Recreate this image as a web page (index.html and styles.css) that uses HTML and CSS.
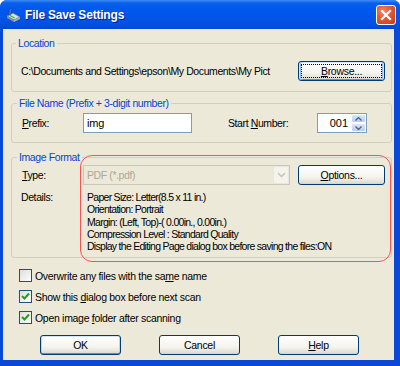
FILE: index.html
```html
<!DOCTYPE html>
<html>
<head>
<meta charset="utf-8">
<link rel="stylesheet" href="styles.css">
</head>
<body>
<div class="window">
  <div class="titlebar">
    <svg class="app-icon" width="16" height="16" viewBox="0 0 16 16">
      <path d="M2 9 L9 13 L15 10 L8 6 Z" fill="#d8dce4" stroke="#6a7080" stroke-width="0.8"/>
      <path d="M2 9 L2 11 L9 15 L9 13 Z" fill="#8a909c"/>
      <path d="M9 13 L9 15 L15 12 L15 10 Z" fill="#a8aeb8"/>
      <path d="M3 8 L5 1 L7 2 L6 7 Z" fill="#3a6fd8" stroke="#1a3f98" stroke-width="0.6"/>
      <rect x="4" y="9" width="6" height="1.2" fill="#30c040" transform="rotate(28 7 9.6)"/>
    </svg>
    <span class="title">File Save Settings</span>
    <span class="close">
      <svg width="18" height="18" viewBox="0 0 18 18"><path d="M5 5 L13 13 M13 5 L5 13" stroke="#fff" stroke-width="2.2" stroke-linecap="square"/></svg>
    </span>
  </div>
  <div class="client">
    <fieldset class="group g-location">
      <legend>Location</legend>
      <div class="row">
        <span class="path">C:\Documents and Settings\epson\My Documents\My Pict</span>
        <button class="btn btn-focus"><u>B</u>rowse...</button>
      </div>
    </fieldset>

    <fieldset class="group g-name">
      <legend>File Name (Prefix + 3-digit number)</legend>
      <div class="row">
        <span class="lbl-prefix"><u>P</u>refix:</span>
        <span class="textbox prefix">img</span>
        <span class="lbl-start">Start <u>N</u>umber:</span>
        <span class="spin">
          <span class="spin-val">001</span>
          <span class="spin-btns">
            <span class="spin-b"><svg width="7" height="4" viewBox="0 0 7 4"><path d="M0.5 3.5 L3.5 0.5 L6.5 3.5" fill="none" stroke="#4d6185" stroke-width="1.3"/></svg></span>
            <span class="spin-b"><svg width="7" height="4" viewBox="0 0 7 4"><path d="M0.5 0.5 L3.5 3.5 L6.5 0.5" fill="none" stroke="#4d6185" stroke-width="1.3"/></svg></span>
          </span>
        </span>
      </div>
    </fieldset>

    <fieldset class="group g-format">
      <legend>Image Format</legend>
      <div class="fmt-grid">
        <span class="lbl-type"><u>T</u>ype:</span>
        <span class="combo">
          <span class="combo-val">PDF (*.pdf)</span>
          <span class="combo-btn"><svg width="9" height="6" viewBox="0 0 9 6"><path d="M1 1 L4.5 4.5 L8 1" fill="none" stroke="#c9c7ba" stroke-width="1.6"/></svg></span>
        </span>
        <button class="btn"><u>O</u>ptions...</button>
        <span class="lbl-details">Details:</span>
        <div class="details">
          <div>Paper Size: Letter(8.5 x 11 in.)</div>
          <div>Orientation: Portrait</div>
          <div>Margin: (Left, Top)-( 0.00in., 0.00in.)</div>
          <div>Compression Level : Standard Quality</div>
          <div>Display the Editing Page dialog box before saving the files:ON</div>
        </div>
      </div>
    </fieldset>

    <div class="checks">
      <div class="check"><span class="box"></span><span>Overwrite any files with the sa<u>m</u>e name</span></div>
      <div class="check"><span class="box on"><svg width="11" height="11" viewBox="0 0 11 11"><path d="M2 5 L4.5 7.5 L9 2.5" fill="none" stroke="#21a121" stroke-width="2"/></svg></span><span>Show this <u>d</u>ialog box before next scan</span></div>
      <div class="check"><span class="box on"><svg width="11" height="11" viewBox="0 0 11 11"><path d="M2 5 L4.5 7.5 L9 2.5" fill="none" stroke="#21a121" stroke-width="2"/></svg></span><span>Open image <u>f</u>older after scanning</span></div>
    </div>

    <div class="buttons">
      <button class="btn btn-wide btn-default">OK</button>
      <button class="btn btn-wide">Cancel</button>
      <button class="btn btn-wide"><u>H</u>elp</button>
    </div>

    <div class="annot"></div>
  </div>
</div>
</body>
</html>
```
FILE: styles.css
```css
html, body {
  margin: 0;
  padding: 0;
  background: #ffffff;
}
body {
  width: 400px;
  height: 366px;
  overflow: hidden;
  font-family: "Liberation Sans", Arial, sans-serif;
  font-size: 10.5px;
  letter-spacing: -0.4px;
  color: #000;
}
u { text-decoration: underline; text-underline-offset: 1px; }

.window {
  width: 400px;
  height: 366px;
  display: flex;
  flex-direction: column;
  background: #0a48d8;
  border-radius: 7px 7px 0 0;
  overflow: hidden;
}

.titlebar {
  flex: 0 0 29px;
  display: flex;
  align-items: center;
  background: linear-gradient(#3d8cf7 0px, #0a5fea 3px, #0058ee 8px, #0055e8 18px, #004fe0 25px, #0046d2 29px);
}
.app-icon {
  margin-left: 5px;
  margin-top: 1px;
}
.title {
  margin-left: 4px;
  color: #fff;
  font-weight: bold;
  font-size: 12px;
  letter-spacing: -0.2px;
  text-shadow: 1px 1px 0 #0a1e80;
}
.close {
  margin-left: auto;
  margin-right: 4px;
  width: 20px;
  height: 20px;
  box-sizing: border-box;
  border: 1px solid #fff;
  border-radius: 3px;
  background: radial-gradient(circle at 35% 30%, #f08a6c 0%, #e45a38 40%, #c8391a 100%);
  display: flex;
  align-items: center;
  justify-content: center;
  align-self: flex-start;
  margin-top: 5px;
}

.client {
  flex: 1;
  margin: 0 6px 6px 3px;
  background: #ece9d8;
  position: relative;
  padding: 8px 2px 0 8px;
}

.group {
  margin: 0;
  border: 1px solid #d0d0bf;
  border-radius: 3px;
  padding: 0 6px 0 10px;
  min-width: 0;
}
.group legend {
  color: #0046d5;
  padding: 0 2px;
  margin-left: -5px;
  height: 13px;
  line-height: 13px;
  font-size: 10.5px;
  letter-spacing: -0.4px;
}

.row {
  display: flex;
  align-items: center;
  height: 20px;
}

.g-location { padding: 11px 6px 10px 9px; }
.g-location .row { justify-content: space-between; }

.g-name { margin-top: 5px; padding: 3px 6px 9px 10px; }
.lbl-prefix { width: 61px; }
.textbox {
  box-sizing: border-box;
  height: 20px;
  border: 1px solid #7f9db9;
  background: #fff;
  display: flex;
  align-items: center;
  padding-left: 3px;
  font-size: 11px;
  letter-spacing: -0.2px;
}
.prefix { width: 109px; }
.lbl-start { margin-left: 36px; width: 89px; }

.spin {
  box-sizing: border-box;
  width: 50px;
  height: 20px;
  border: 1px solid #7f9db9;
  background: #fff;
  display: flex;
  align-items: center;
  font-size: 11px;
  letter-spacing: 0;
}
.spin-val {
  flex: 1;
  text-align: right;
  padding-right: 3px;
}
.spin-btns {
  width: 15px;
  height: 18px;
  display: flex;
  flex-direction: column;
}
.spin-b {
  flex: 1;
  box-sizing: border-box;
  border: 1px solid #fff;
  border-radius: 2px;
  background: linear-gradient(#dde6fb, #b8cbf5);
  display: flex;
  align-items: center;
  justify-content: center;
}

.g-format { margin-top: 8px; padding: 1px 6px 5px 10px; }
.fmt-grid {
  display: grid;
  grid-template-columns: 53px 207px 87px;
  grid-template-rows: 20px auto;
  column-gap: 8px;
  align-items: center;
}
.combo {
  box-sizing: border-box;
  height: 20px;
  border: 1px solid #c9c7ba;
  display: flex;
  align-items: center;
  color: #aca899;
  padding-left: 3px;
}
.combo-val { flex: 1; }
.combo-btn {
  width: 16px;
  height: 18px;
  box-sizing: border-box;
  border: 1px solid #e8e6df;
  border-radius: 2px;
  background: #f4f3ee;
  display: flex;
  align-items: center;
  justify-content: center;
}
.lbl-details {
  align-self: start;
  margin-left: -1px;
  margin-top: 6px;
  line-height: 12.25px;
}
.details {
  grid-column: 2 / span 2;
  margin-top: 6px;
  margin-left: 4px;
  line-height: 12.25px;
  white-space: nowrap;
  letter-spacing: -0.72px;
}

.checks {
  margin-top: 7px;
  padding-left: 8px;
  letter-spacing: -0.3px;
}
.check {
  height: 21px;
  display: flex;
  align-items: center;
}
.box {
  box-sizing: border-box;
  width: 13px;
  height: 13px;
  border: 1px solid #1c5180;
  background: linear-gradient(135deg, #dcdcd7, #ffffff);
  margin-right: 3px;
  display: flex;
  align-items: center;
  justify-content: center;
}

.buttons {
  margin-top: 7px;
  padding-left: 29px;
  display: flex;
  gap: 38px;
}

.btn {
  box-sizing: border-box;
  height: 20px;
  width: 87px;
  border: 1px solid #003c74;
  border-radius: 3px;
  background: linear-gradient(#ffffff, #f5f4ef 60%, #e3e0d6 90%, #d6d0c5);
  font-family: inherit;
  font-size: 10.5px;
  letter-spacing: -0.3px;
  color: #000;
  padding: 0;
}
.btn-focus {
  box-shadow: inset 1px 0 0 #cee7ff, inset -1px 0 0 #cee7ff, inset 2px 0 0 #98b8ea, inset -2px 0 0 #98b8ea, inset 0 1px 0 #cee7ff, inset 0 -1px 0 #6982ee;
  outline: 1px dotted #000;
  outline-offset: -4px;
}
.btn-default {
  box-shadow: inset 0 1px 0 #cee7ff, inset 0 -1px 0 #6982ee, inset 1px 0 0 #b8d4fb, inset -1px 0 0 #b8d4fb;
}
.btn-wide { width: 81px; }

.annot {
  position: absolute;
  left: 77px;
  top: 126px;
  width: 311px;
  height: 107px;
  box-sizing: border-box;
  border: 1.5px solid #f65353;
  border-radius: 12px;
  pointer-events: none;
}
```
